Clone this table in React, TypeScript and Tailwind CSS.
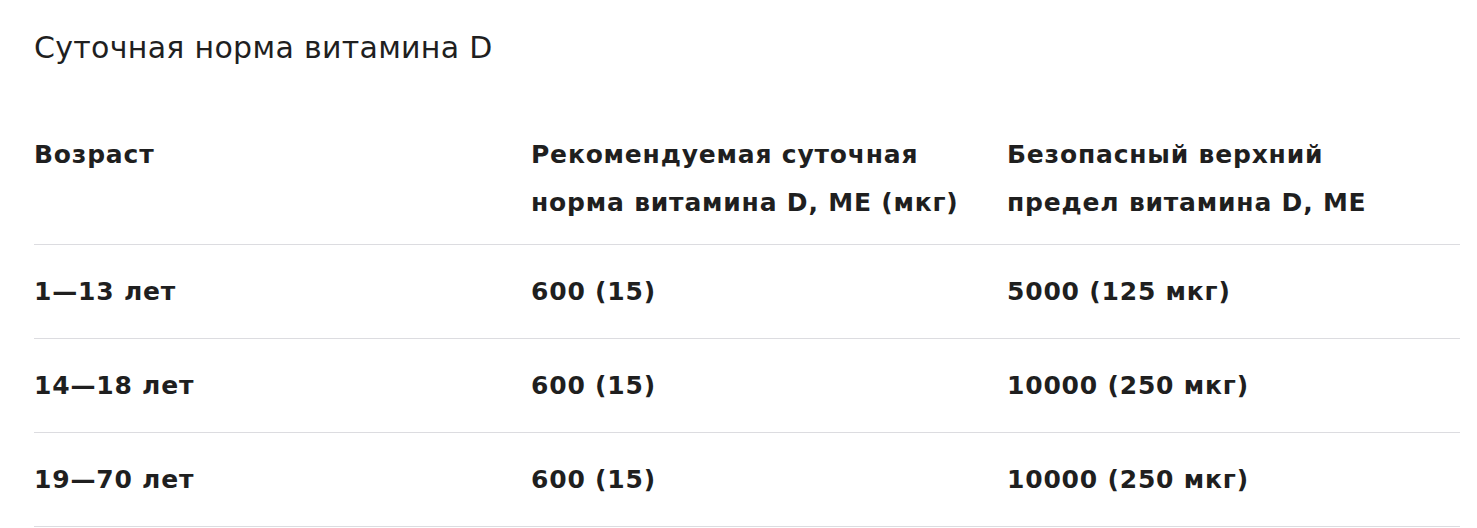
const rows = [
  { age: "1—13 лет", rda: "600 (15)", ul: "5000 (125 мкг)" },
  { age: "14—18 лет", rda: "600 (15)", ul: "10000 (250 мкг)" },
  { age: "19—70 лет", rda: "600 (15)", ul: "10000 (250 мкг)" },
];

export default function App() {
  return (
    <div
      className="w-[1477px] h-[528px] bg-white text-[#1f1f1f] overflow-hidden"
      style={{ fontFamily: "'DejaVu Sans', 'Noto Sans', sans-serif" }}
    >
      <div className="pl-[34px] pr-[17px]">
        <h2 className="pt-[27px] text-[30px] leading-[42px] font-normal tracking-[0.3px]">
          Суточная норма витамина D
        </h2>

        <div className="mt-[39px] text-[25px] font-bold tracking-[0.8px]">
          {/* Header */}
          <div className="grid grid-cols-[497px_476px_1fr] border-b-[1.5px] border-[#dcdce0] pt-[23px] pb-[17px] leading-[48px]">
            <div>Возраст</div>
            <div>
              Рекомендуемая суточная
              <br />
              норма витамина D, МЕ (мкг)
            </div>
            <div>
              Безопасный верхний
              <br />
              предел витамина D, МЕ
            </div>
          </div>

          {rows.map((r) => (
            <div
              key={r.age}
              className="grid grid-cols-[497px_476px_1fr] border-b-[1.5px] border-[#dcdce0] pt-[23px] pb-[22px] leading-[48px]"
            >
              <div>{r.age}</div>
              <div>{r.rda}</div>
              <div>{r.ul}</div>
            </div>
          ))}
        </div>
      </div>
    </div>
  );
}
